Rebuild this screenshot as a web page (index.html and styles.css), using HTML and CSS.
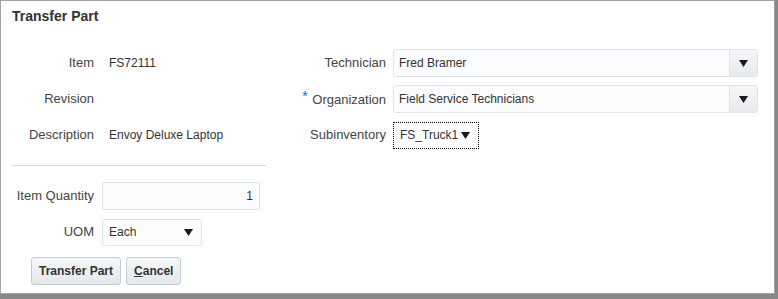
FILE: index.html
```html
<!doctype html>
<html lang="en">
    <head>
        <meta charset="UTF-8" />
        <title>Transfer Part</title>
        <link rel="stylesheet" href="styles.css">
    </head>
    <body>
        <div class="dialog">
            <h1 class="dialog-title">Transfer Part</h1>

            <div class="dialog-body">
                <div class="col-left">
                    <div class="form-grid">
                        <span class="label">Item</span>
                        <span class="value">FS72111</span>
                        <span class="label">Revision</span>
                        <span class="value"></span>
                        <span class="label">Description</span>
                        <span class="value">Envoy Deluxe Laptop</span>
                    </div>

                    <hr class="separator" />

                    <div class="form-grid">
                        <label class="label" for="qty">Item Quantity</label>
                        <input class="text-input qty" id="qty" type="text" value="1" />
                        <span class="label">UOM</span>
                        <div class="select uom">
                            <span>Each</span>
                            <svg class="arrow" width="9" height="7" viewBox="0 0 9 7"><polygon points="0,0 9,0 4.5,7" /></svg>
                        </div>
                    </div>

                    <div class="buttons">
                        <button class="btn">Transfer Part</button>
                        <button class="btn"><u>C</u>ancel</button>
                    </div>
                </div>

                <div class="col-right">
                    <div class="form-grid wide">
                        <span class="label">Technician</span>
                        <div class="combo">
                            <span class="combo-text">Fred Bramer</span>
                            <span class="combo-btn">
                                <svg class="arrow" width="9" height="7" viewBox="0 0 9 7"><polygon points="0,0 9,0 4.5,7" /></svg>
                            </span>
                        </div>

                        <span class="label"><span class="required">*</span> Organization</span>
                        <div class="combo">
                            <span class="combo-text">Field Service Technicians</span>
                            <span class="combo-btn">
                                <svg class="arrow" width="9" height="7" viewBox="0 0 9 7"><polygon points="0,0 9,0 4.5,7" /></svg>
                            </span>
                        </div>

                        <span class="label">Subinventory</span>
                        <div class="select focused">
                            <span>FS_Truck1</span>
                            <svg class="arrow" width="9" height="7" viewBox="0 0 9 7"><polygon points="0,0 9,0 4.5,7" /></svg>
                        </div>
                    </div>
                </div>
            </div>
        </div>
    </body>
</html>
```

FILE: styles.css
```css
:root {
    --label-color: #444444;
    --text-color: #333333;
    --field-bg: #fbfcfd;
    --field-border: #dfe4e8;
    --button-border: #c4ced7;
}

* {
    box-sizing: border-box;
}

body {
    margin: 0;
    background-color: #878787;
    font-family: "Liberation Sans", Arial, sans-serif;
    color: var(--text-color);
    font-size: 12px;
}

.dialog {
    width: 775px;
    height: 294px;
    background-color: #ffffff;
    border: 1px solid #a3a3a3;
    padding: 7px 0 0 11px;
}

.dialog-title {
    margin: 0 0 24px;
    font-size: 14px;
    line-height: 17px;
    font-weight: 700;
    color: var(--text-color);
}

.dialog-body {
    display: flex;
    gap: 24px;
}

.col-left {
    width: 254px;
}

.form-grid {
    display: grid;
    grid-template-columns: 82px 1fr;
    grid-auto-rows: 28px;
    column-gap: 8px;
    row-gap: 8px;
    align-items: center;
}

.form-grid.wide {
    grid-template-columns: 96px 365px;
    column-gap: 7px;
}

.label {
    text-align: right;
    font-size: 13px;
    color: var(--label-color);
    white-space: nowrap;
    padding-bottom: 1px;
}

.required {
    color: #0572ce;
    font-size: 14px;
    position: relative;
    top: -3px;
    margin-right: 1px;
}

.value {
    padding-left: 7px;
}

.separator {
    border: none;
    border-top: 1px solid #dcdcdc;
    margin: 16px 0 16px;
}

.text-input {
    height: 28px;
    border: 1px solid var(--field-border);
    border-radius: 2px;
    background-color: var(--field-bg);
    font: inherit;
    color: var(--text-color);
    padding: 0 6px;
}

.qty {
    width: 158px;
    text-align: right;
}

.select {
    height: 27px;
    display: flex;
    align-items: center;
    justify-content: space-between;
    padding: 0 8px 0 6px;
    border: 1px solid var(--field-border);
    border-radius: 2px;
    background-color: var(--field-bg);
}

.uom {
    width: 100px;
}

.select.focused {
    width: 86px;
    border: 1px dotted #000000;
    border-radius: 0;
    background-color: #ffffff;
    padding-right: 8px;
}

.arrow {
    display: block;
    fill: #1a1a1a;
}

.combo {
    height: 28px;
    display: flex;
    border: 1px solid var(--field-border);
    border-radius: 3px;
    background-color: var(--field-bg);
}

.combo-text {
    flex: 1;
    display: flex;
    align-items: center;
    padding-left: 5px;
}

.combo-btn {
    width: 28px;
    display: flex;
    align-items: center;
    justify-content: center;
    border-left: 1px solid var(--field-border);
    border-radius: 0 3px 3px 0;
    background: linear-gradient(#f6f7f8, #e7eaec);
}

.buttons {
    display: flex;
    gap: 5px;
    margin: 11px 0 0 19px;
}

.btn {
    height: 28px;
    padding: 0 7px;
    border: 1px solid var(--button-border);
    border-radius: 3px;
    background: linear-gradient(#f5f7f8, #e4e8eb);
    font-family: "Liberation Sans", Arial, sans-serif;
    font-size: 12px;
    font-weight: 700;
    color: var(--text-color);
}

.btn u {
    font-weight: 700;
}
```
